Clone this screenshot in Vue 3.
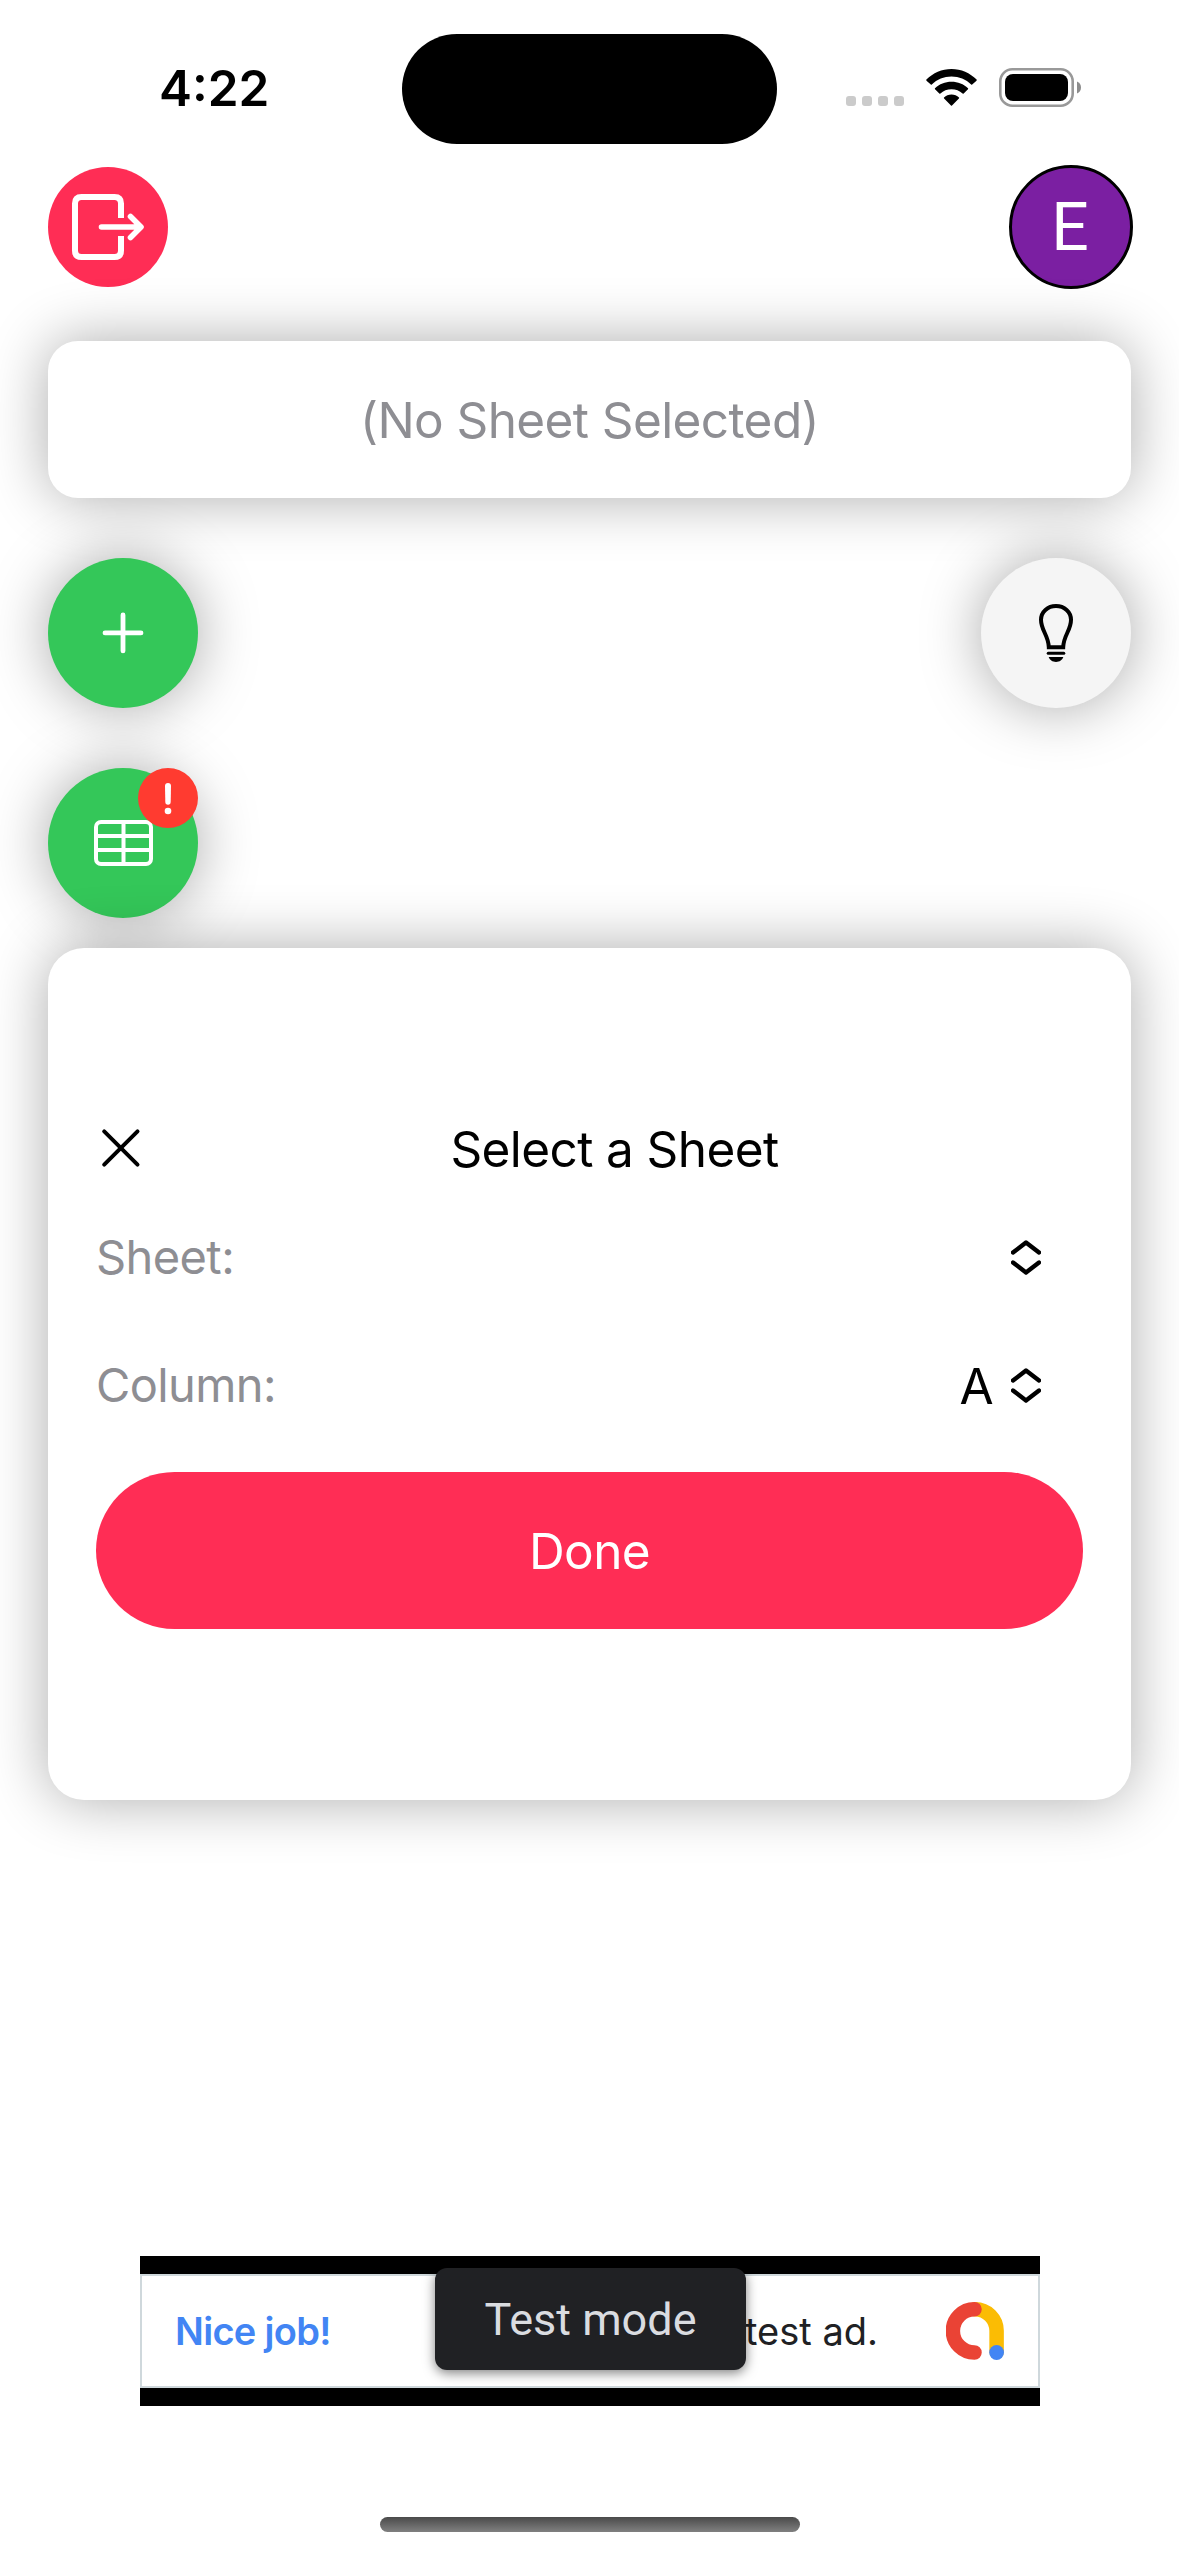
<script setup>
import { ref } from 'vue'

const sheetName = ref('')
const column = ref('A')
</script>

<template>
  <div class="screen">
    <header class="status">
      <div class="time"><span>4:22</span></div>
      <div class="island"></div>
      <div class="indicators">
        <div class="dots"><i v-for="n in 4" :key="n"></i></div>
        <svg class="wifi" width="51" height="37" viewBox="0 0 51 37">
          <path d="M0.4 10.6C7 4 15.900 0 25.500 0S44 4 50.600 10.600Q51 11.200 50.500 11.700L46.200 15.600Q45.700 16 45.200 15.500C40 10.500 33 7.600 25.500 7.600S11 10.500 5.800 15.500Q5.300 16 4.800 15.600L0.500 11.700Q0 11.200 0.400 10.600Z" />
          <path d="M9 19.200C13.400 15 19.100 12.700 25.500 12.700S37.600 15 42 19.200Q42.400 19.800 42 20.300L37.700 24.500Q37.200 25 36.600 24.500C33.600 21.800 29.800 20.300 25.500 20.300S17.400 21.800 14.400 24.500Q13.800 25 13.300 24.500L9 20.300Q8.600 19.800 9 19.200Z" />
          <path d="M18 28.400C20 26.500 22.600 25.400 25.500 25.400S31 26.500 33 28.400Q33.400 29 32.900 29.500L26 36.500Q25.500 37 25 36.500L18.100 29.500Q17.600 29 18 28.400Z" />
        </svg>
        <svg class="battery" width="82" height="39" viewBox="0 0 82 39">
          <rect x="1.300" y="1.300" width="72.400" height="36.400" rx="12" fill="none" stroke="#999" stroke-width="2.600" />
          <rect x="6" y="6" width="63" height="27" rx="8" />
          <path d="M78 13.500C80.500 14.500 82 16.800 82 19.500S80.500 24.500 78 25.500Z" fill="#8c8c8c" />
        </svg>
      </div>
    </header>

    <div class="topbar">
      <button class="exit" aria-label="Sign out">
        <svg width="120" height="120" viewBox="0 0 120 120" fill="none" stroke="#fff" stroke-width="6">
          <path d="M73 51V36.500Q73 30 66.500 30H33.500Q27 30 27 36.500V83.500Q27 90 33.500 90H66.500Q73 90 73 83.500V69" />
          <path d="M53.500 60H92M82.500 49.500L93 60L82.500 70.500" stroke-width="5.600" stroke-linecap="round" stroke-linejoin="round" />
        </svg>
      </button>
      <div class="avatar"><span>E</span></div>
    </div>

    <section class="selected"><span>(No Sheet Selected)</span></section>

    <div class="tools">
      <button class="fab green" aria-label="Add">
        <svg class="plus" width="42" height="42" viewBox="0 0 42 42" stroke="#fff" stroke-width="4.800" stroke-linecap="round">
          <path d="M21 2.900V38.900M3 20.900H39" />
        </svg>
      </button>
      <button class="fab light" aria-label="Hints">
        <svg width="34" height="58" viewBox="0 0 34 58" fill="none" stroke="#000" stroke-width="4">
          <path d="M9.800 43.200C9.400 31 2 26.500 2 15.800C2 8 8.700 2 17 2S32 8 32 15.800C32 26.500 24.600 31 24.200 43.200Z" />
          <path d="M9.200 49.300H24.800" stroke-width="3" stroke-linecap="round" />
          <path d="M9.700 53H24.300C23.500 56 20.500 57.900 17 57.900S10.500 56 9.700 53Z" fill="#000" stroke="none" />
        </svg>
      </button>
    </div>

    <div class="tools second">
      <button class="fab green" aria-label="Sheets">
        <svg width="59" height="46" viewBox="0 0 59 46" fill="none" stroke="#fff" stroke-width="4">
          <rect x="2" y="2" width="55" height="42" rx="5" />
          <path d="M2 16H57M2 30H57M29.500 2V44" />
        </svg>
        <span class="badge">
          <svg width="60" height="60" viewBox="0 0 60 60" fill="#fff">
            <path d="M27 18Q27 15 30 15T33 18L32.700 34Q32.600 36.700 30 36.700T27.300 34Z" />
            <circle cx="30" cy="43" r="3.300" />
          </svg>
        </span>
      </button>
    </div>

    <section class="panel">
      <div class="head">
        <button class="close" aria-label="Close">
          <svg width="50" height="40" viewBox="0 0 50 40" stroke="#000" stroke-width="4" stroke-linecap="round">
            <path d="M8.200 3.300L41.500 36.700M41.500 3.300L8.200 36.700" />
          </svg>
        </button>
        <h1><span>Select a Sheet</span></h1>
      </div>
      <div class="row">
        <label>Sheet:</label>
        <div class="picker">
          <span>{{ sheetName }}</span>
          <svg width="30" height="35" viewBox="0 0 30 35"><path d="M2 12.500L15 2.500L28 12.500M2 22.500L15 32.500L28 22.500" /></svg>
        </div>
      </div>
      <div class="row">
        <label>Column:</label>
        <div class="picker">
          <span>{{ column }}</span>
          <svg width="30" height="35" viewBox="0 0 30 35"><path d="M2 12.500L15 2.500L28 12.500M2 22.500L15 32.500L28 22.500" /></svg>
        </div>
      </div>
      <button class="done"><span>Done</span></button>
    </section>

    <aside class="ad">
      <div class="ad-body">
        <strong>Nice job!</strong>
        <span class="ad-text">test ad.</span>
        <svg width="58" height="58" viewBox="0 0 58 58" fill="none" stroke-width="14.500" stroke-linecap="round">
          <path d="M29 7.250A21.600 21.600 0 0 1 50.600 29V50" stroke="#fbbc04" />
          <path d="M28.500 7.250A21.600 21.600 0 0 0 28.500 50.500" stroke="#ea4335" />
          <circle cx="50.600" cy="50.500" r="7.400" fill="#4285f4" />
        </svg>
      </div>
      <div class="tooltip"><span>Test mode</span></div>
    </aside>

    <div class="home"></div>
  </div>
</template>

<style>
body {
  margin: 0;
  background: #fff;
}
</style>

<style scoped>
.screen {
  width: 1179px;
  height: 2556px;
  box-sizing: border-box;
  display: flex;
  flex-direction: column;
  overflow: hidden;
  background: #fff;
  color: #000;
  font-family: Inter, "Liberation Sans", sans-serif;
  font-size: 49.500px;
  line-height: 60px;
  letter-spacing: -0.6px;
}
button {
  border: 0;
  padding: 0;
  margin: 0;
  font: inherit;
  letter-spacing: inherit;
  color: inherit;
  background: none;
}
svg {
  display: block;
}
span {
  white-space: nowrap;
}

.status {
  display: flex;
  height: 110px;
  padding-top: 34px;
}
.time {
  width: 402px;
  box-sizing: border-box;
  padding: 24px 0 0 159px;
  font-weight: 600;
  letter-spacing: 0;
}
.island {
  width: 375px;
  height: 110px;
  border-radius: 55px;
  background: #000;
}
.indicators {
  display: flex;
  align-items: flex-start;
  padding: 34px 0 0 69px;
}
.dots {
  display: flex;
  gap: 6px;
  padding-top: 28px;
}
.dots i {
  width: 10px;
  height: 10px;
  border-radius: 3px;
  background: #cbcbcb;
}
.wifi {
  margin: 1px 0 0 22px;
}
.battery {
  margin-left: 22px;
}

.topbar {
  display: flex;
  justify-content: space-between;
  align-items: center;
  height: 124px;
  margin: 21px 46px 0 48px;
}
.exit {
  width: 120px;
  height: 120px;
  border-radius: 50%;
  background: #ff2d55;
}
.avatar {
  box-sizing: border-box;
  width: 124px;
  height: 124px;
  padding: 2px 2px 0 0;
  border: 3px solid #000;
  border-radius: 50%;
  background: #7b1fa2;
  color: #fff;
  display: flex;
  align-items: center;
  justify-content: center;
  font-family: Roboto, sans-serif;
  font-size: 66px;
  letter-spacing: 0;
}

.selected {
  height: 157px;
  margin: 52px 48px 0;
  border-radius: 30px;
  background: #fff;
  box-shadow: 0 0 60px rgba(0, 0, 0, 0.33);
  display: flex;
  align-items: center;
  justify-content: center;
  color: #8e8e93;
}

.tools {
  display: flex;
  justify-content: space-between;
  margin: 60px 48px 0;
}
.fab {
  position: relative;
  width: 150px;
  height: 150px;
  border-radius: 50%;
  box-shadow: 0 0 60px rgba(0, 0, 0, 0.35);
  display: flex;
  align-items: center;
  justify-content: center;
}
.plus {
  margin-right: 1px;
}
.green {
  background: #34c759;
}
.light {
  background: #f5f5f5;
}
.badge {
  position: absolute;
  top: 0;
  right: 0;
  width: 60px;
  height: 60px;
  border-radius: 50%;
  background: #ff3b30;
}

.panel {
  position: relative;
  box-sizing: border-box;
  height: 852px;
  margin: 30px 48px 0;
  padding: 160px 48px 0;
  border-radius: 36px;
  background: #fff;
  box-shadow: 0 0 60px rgba(0, 0, 0, 0.33);
}
.head {
  display: flex;
  align-items: center;
  height: 80px;
}
.close {
  width: 50px;
}
h1 {
  flex: 1;
  margin: 0;
  padding-top: 1px;
  text-align: center;
  font: inherit;
}
.row {
  display: flex;
  align-items: center;
  justify-content: space-between;
  height: 80px;
  margin-top: 29px;
}
.row + .row {
  margin-top: 48px;
}
label {
  font-size: 47px;
  color: #8e8e93;
}
.picker {
  display: flex;
  align-items: center;
  gap: 18px;
  margin-right: 42px;
}
.picker span {
  padding-top: 2px;
}
.picker path {
  fill: none;
  stroke: #000;
  stroke-width: 4.400;
  stroke-linecap: round;
  stroke-linejoin: round;
}
.done {
  display: block;
  width: 100%;
  height: 157px;
  margin-top: 47px;
  border-radius: 79px;
  background: #ff2d55;
  color: #fff;
}

.ad {
  position: relative;
  box-sizing: border-box;
  width: 900px;
  height: 150px;
  margin: 456px 0 0 140px;
  padding: 18px 0;
  background: #000;
}
.ad-body {
  box-sizing: border-box;
  height: 114px;
  border: 2px solid #cfd8dc;
  background: #fff;
  display: flex;
  align-items: center;
  padding: 0 34px 0 33px;
  font-size: 38px;
  letter-spacing: 0;
}
.ad-body strong {
  color: #4285f4;
  font-weight: 600;
  letter-spacing: -0.7px;
}
.ad-text {
  margin-left: auto;
  margin-right: 68px;
  color: #202124;
}
.tooltip {
  position: absolute;
  left: 295px;
  top: 12px;
  box-sizing: border-box;
  width: 311px;
  height: 102px;
  padding-top: 2px;
  border-radius: 12px;
  background: #202124;
  box-shadow: 0 3px 12px rgba(0, 0, 0, 0.5);
  color: #dadce0;
  display: flex;
  align-items: center;
  justify-content: center;
  font-family: Roboto, sans-serif;
  font-size: 45px;
  letter-spacing: 0;
}
.home {
  width: 420px;
  height: 15px;
  margin: 111px auto 0 380px;
  border-radius: 8px;
  background: linear-gradient(#4a4a4a, #808080);
}
</style>
